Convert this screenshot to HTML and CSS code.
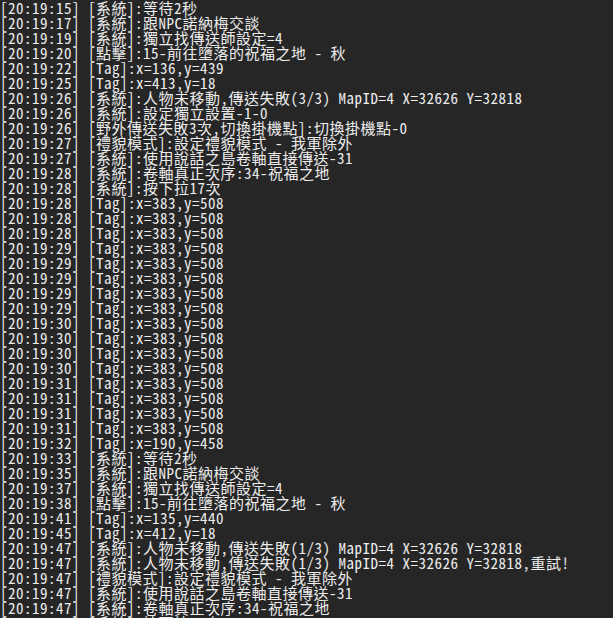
FILE: index.html
```html
<!DOCTYPE html>
<html lang="zh-Hant">
<head>
<meta charset="utf-8">
<title>Log</title>
<link rel="stylesheet" href="styles.css">
</head>
<body>
<div class="log">
<div class="line">[20:19:15] [系統]:等待2秒</div>
<div class="line">[20:19:17] [系統]:跟NPC諾納梅交談</div>
<div class="line">[20:19:19] [系統]:獨立找傳送師設定=4</div>
<div class="line">[20:19:20] [點擊]:15-前往墮落的祝福之地 - 秋</div>
<div class="line">[20:19:22] [Tag]:x=136,y=439</div>
<div class="line">[20:19:25] [Tag]:x=413,y=18</div>
<div class="line">[20:19:26] [系統]:人物未移動,傳送失敗(3/3) MapID=4 X=32626 Y=32818</div>
<div class="line">[20:19:26] [系統]:設定獨立設置-1-0</div>
<div class="line">[20:19:26] [野外傳送失敗3次,切換掛機點]:切換掛機點-0</div>
<div class="line">[20:19:27] [禮貌模式]:設定禮貌模式 - 我軍除外</div>
<div class="line">[20:19:27] [系統]:使用說話之島卷軸直接傳送-31</div>
<div class="line">[20:19:28] [系統]:卷軸真正次序:34-祝福之地</div>
<div class="line">[20:19:28] [系統]:按下拉17次</div>
<div class="line">[20:19:28] [Tag]:x=383,y=508</div>
<div class="line">[20:19:28] [Tag]:x=383,y=508</div>
<div class="line">[20:19:28] [Tag]:x=383,y=508</div>
<div class="line">[20:19:29] [Tag]:x=383,y=508</div>
<div class="line">[20:19:29] [Tag]:x=383,y=508</div>
<div class="line">[20:19:29] [Tag]:x=383,y=508</div>
<div class="line">[20:19:29] [Tag]:x=383,y=508</div>
<div class="line">[20:19:29] [Tag]:x=383,y=508</div>
<div class="line">[20:19:30] [Tag]:x=383,y=508</div>
<div class="line">[20:19:30] [Tag]:x=383,y=508</div>
<div class="line">[20:19:30] [Tag]:x=383,y=508</div>
<div class="line">[20:19:30] [Tag]:x=383,y=508</div>
<div class="line">[20:19:31] [Tag]:x=383,y=508</div>
<div class="line">[20:19:31] [Tag]:x=383,y=508</div>
<div class="line">[20:19:31] [Tag]:x=383,y=508</div>
<div class="line">[20:19:31] [Tag]:x=383,y=508</div>
<div class="line">[20:19:32] [Tag]:x=190,y=458</div>
<div class="line">[20:19:33] [系統]:等待2秒</div>
<div class="line">[20:19:35] [系統]:跟NPC諾納梅交談</div>
<div class="line">[20:19:37] [系統]:獨立找傳送師設定=4</div>
<div class="line">[20:19:38] [點擊]:15-前往墮落的祝福之地 - 秋</div>
<div class="line">[20:19:41] [Tag]:x=135,y=440</div>
<div class="line">[20:19:45] [Tag]:x=412,y=18</div>
<div class="line">[20:19:47] [系統]:人物未移動,傳送失敗(1/3) MapID=4 X=32626 Y=32818</div>
<div class="line">[20:19:47] [系統]:人物未移動,傳送失敗(1/3) MapID=4 X=32626 Y=32818,重試!</div>
<div class="line">[20:19:47] [禮貌模式]:設定禮貌模式 - 我軍除外</div>
<div class="line">[20:19:47] [系統]:使用說話之島卷軸直接傳送-31</div>
<div class="line">[20:19:47] [系統]:卷軸真正次序:34-祝福之地</div>
<div class="line">[20:19:47] [系統]:按下拉17次</div>
</div>
</body>
</html>
```

FILE: styles.css
```css
html, body {
  margin: 0;
  padding: 0;
  background: #262626;
  overflow: hidden;
}
.log {
  height: 618px;
  overflow: hidden;
  color: #ededed;
  font-family: "Noto Sans Mono CJK TC", "Noto Sans CJK TC", monospace;
  font-size: 15px;
  letter-spacing: 0.5px;
  line-height: 15px;
}
.line {
  white-space: pre;
  height: 15px;
}
```
